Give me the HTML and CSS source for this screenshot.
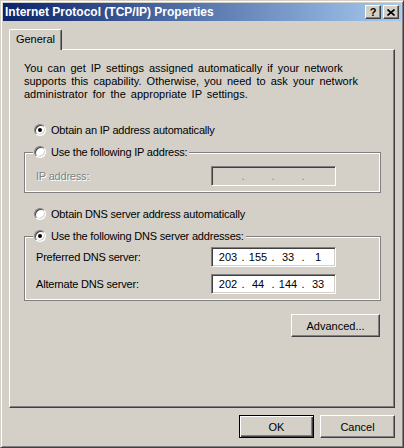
FILE: index.html
```html
<!DOCTYPE html>
<html lang="en">
<head>
    <meta charset="UTF-8">
    <meta name="viewport" content="width=device-width, initial-scale=1.0">
    <title>Internet Protocol (TCP/IP) Properties</title>
    <link rel="stylesheet" href="styles.css">
</head>
<body>
    <div class="window">
        <div class="caption">
            <span class="caption-title">Internet Protocol (TCP/IP) Properties</span>
            <div class="caption-buttons">
                <button class="cap-btn help">?</button>
                <button class="cap-btn close">
                    <svg width="8" height="7" viewBox="0 0 8 7">
                        <path d="M0.5 0.5 L7.5 6.5 M7.5 0.5 L0.5 6.5" stroke="#000" stroke-width="1.6" fill="none"/>
                    </svg>
                </button>
            </div>
        </div>

        <div class="dialog-body">
            <div class="tabs">
                <div class="tab active">General</div>
            </div>

            <div class="panel">
                <p class="intro">
                    You can get IP settings assigned automatically if your network<br>
                    supports this capability. Otherwise, you need to ask your network<br>
                    administrator for the appropriate IP settings.
                </p>

                <div class="option first">
                    <span class="radio checked"></span>
                    <span>Obtain an IP address automatically</span>
                </div>

                <fieldset class="group">
                    <legend class="option">
                        <span class="radio"></span>
                        <span>Use the following IP address:</span>
                    </legend>
                    <div class="field-row">
                        <span class="field-label disabled">IP address:</span>
                        <div class="ipbox disabled">
                            <span class="oct"></span><span class="dot">.</span>
                            <span class="oct"></span><span class="dot">.</span>
                            <span class="oct"></span><span class="dot">.</span>
                            <span class="oct"></span>
                        </div>
                    </div>
                </fieldset>

                <div class="option dns-auto">
                    <span class="radio"></span>
                    <span>Obtain DNS server address automatically</span>
                </div>

                <fieldset class="group dns">
                    <legend class="option">
                        <span class="radio checked"></span>
                        <span>Use the following DNS server addresses:</span>
                    </legend>
                    <div class="field-row">
                        <span class="field-label">Preferred DNS server:</span>
                        <div class="ipbox">
                            <span class="oct">203</span><span class="dot">.</span>
                            <span class="oct">155</span><span class="dot">.</span>
                            <span class="oct">33</span><span class="dot">.</span>
                            <span class="oct">1</span>
                        </div>
                    </div>
                    <div class="field-row second">
                        <span class="field-label">Alternate DNS server:</span>
                        <div class="ipbox">
                            <span class="oct">202</span><span class="dot">.</span>
                            <span class="oct">44</span><span class="dot">.</span>
                            <span class="oct">144</span><span class="dot">.</span>
                            <span class="oct">33</span>
                        </div>
                    </div>
                </fieldset>

                <div class="advanced-row">
                    <button class="btn advanced">Advanced...</button>
                </div>
            </div>

            <div class="dialog-buttons">
                <button class="btn default">OK</button>
                <button class="btn">Cancel</button>
            </div>
        </div>
    </div>
</body>
</html>
```

FILE: styles.css
```css
* {
    box-sizing: border-box;
}
body {
    margin: 0;
    width: 404px;
    height: 448px;
    overflow: hidden;
    font-family: "Liberation Sans", Arial, sans-serif;
    font-size: 11px;
    color: #000;
    background-color: #d4d0c8;
}
button {
    font-family: inherit;
    font-size: 11px;
    color: #000;
    padding: 0;
    margin: 0;
}
.window {
    width: 404px;
    height: 448px;
    display: flex;
    flex-direction: column;
    padding: 2px;
    background-color: #d4d0c8;
    border: 1px solid;
    border-color: #d4d0c8 #404040 #404040 #d4d0c8;
    box-shadow: inset 1px 1px #fff, inset -1px -1px #808080;
}
.caption {
    height: 18px;
    display: flex;
    align-items: center;
    justify-content: space-between;
    padding: 0 2px;
    background: linear-gradient(to right, #0a246a, #a6caf0);
}
.caption-title {
    color: #fff;
    font-weight: bold;
    font-size: 12px;
}
.caption-buttons {
    display: flex;
    gap: 2px;
}
.cap-btn {
    width: 16px;
    height: 14px;
    display: flex;
    align-items: center;
    justify-content: center;
    background-color: #d4d0c8;
    border: 1px solid;
    border-color: #fff #404040 #404040 #fff;
    box-shadow: inset -1px -1px #808080;
}
.cap-btn.help {
    font-weight: bold;
    font-size: 11px;
    line-height: 12px;
}
.dialog-body {
    flex: 1;
    display: flex;
    flex-direction: column;
    padding: 8px 6px 0 6px;
}
.tabs {
    display: flex;
    height: 20px;
}
.tab {
    position: relative;
    z-index: 1;
    width: 53px;
    height: 21px;
    text-align: center;
    line-height: 18px;
    background-color: #d4d0c8;
    border: 1px solid;
    border-color: #fff #404040 transparent #fff;
    border-bottom: none;
    border-radius: 2px 2px 0 0;
    box-shadow: inset -1px 0 #808080;
}
.panel {
    height: 359px;
    padding: 0 13px 0 14px;
    border: 1px solid;
    border-color: #fff #404040 #404040 #fff;
    box-shadow: inset -1px -1px #808080;
    letter-spacing: -0.2px;
}
.intro {
    margin: 12px 0 0;
    line-height: 13px;
    letter-spacing: 0;
    word-spacing: 2px;
}
.option {
    display: flex;
    align-items: center;
    gap: 5px;
    height: 14px;
    line-height: 14px;
    margin-left: 10px;
}
.option.first {
    margin-top: 22px;
}
.option.dns-auto {
    margin-top: 14px;
}
.radio {
    flex: none;
    width: 12px;
    height: 12px;
    display: flex;
    align-items: center;
    justify-content: center;
    border-radius: 50%;
    background-color: #fff;
    border: 1px solid;
    border-color: #808080 #fff #fff #808080;
    box-shadow: inset 1px 1px #404040, inset -1px -1px #d4d0c8;
}
.radio.checked::after {
    content: "";
    width: 4px;
    height: 4px;
    border-radius: 50%;
    background-color: #000;
}
.group {
    margin: 8px 0 0;
    padding: 0 0 6px 0;
    border: 1px solid #808080;
    box-shadow: inset 0 0 0 1px #fff;
    min-width: 0;
}
.group legend.option {
    margin-left: 8px;
    padding: 0 2px 0 1px;
    background-color: #d4d0c8;
}
.field-row {
    display: flex;
    align-items: center;
    margin: 7px 0 0 11px;
}
.dns .field-row {
    margin-top: 4px;
}
.dns .field-row.second {
    margin-top: 7px;
}
.field-label {
    width: 175px;
}
.field-label.disabled {
    color: #808080;
    text-shadow: 1px 1px #fff;
}
.ipbox {
    width: 125px;
    height: 20px;
    display: flex;
    align-items: center;
    padding-left: 4px;
    letter-spacing: 0;
    background-color: #fff;
    border: 1px solid;
    border-color: #808080 #fff #fff #808080;
    box-shadow: inset 1px 1px #404040, inset -1px -1px #d4d0c8;
}
.ipbox.disabled {
    background-color: #d4d0c8;
    color: #808080;
}
.oct {
    width: 24px;
    text-align: center;
}
.dot {
    width: 6px;
    text-align: center;
}
.advanced-row {
    display: flex;
    justify-content: flex-end;
    margin-top: 13px;
    padding-right: 1px;
}
.btn {
    width: 75px;
    height: 23px;
    background-color: #d4d0c8;
    border: 1px solid;
    border-color: #fff #404040 #404040 #fff;
    box-shadow: inset -1px -1px #808080;
}
.btn.advanced {
    width: 89px;
}
.btn.default {
    border: 1px solid #000;
    box-shadow: inset 1px 1px #fff, inset -1px -1px #404040, inset -2px -2px #808080;
}
.dialog-buttons {
    display: flex;
    justify-content: flex-end;
    gap: 6px;
    margin-top: 7px;
}
```
